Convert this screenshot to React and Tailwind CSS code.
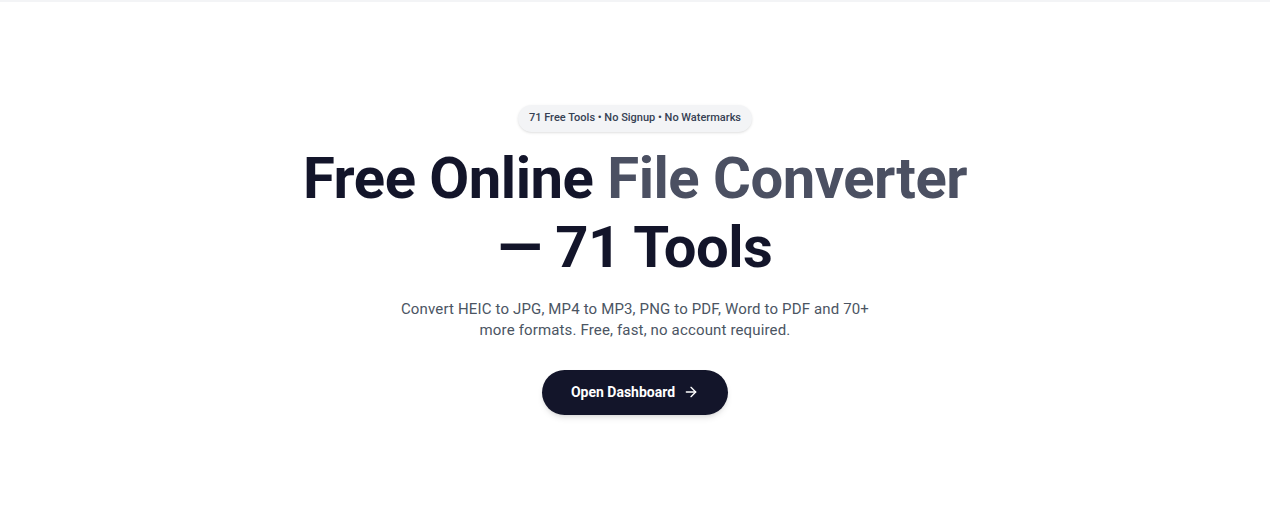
import { ArrowRight } from 'lucide-react';

export default function App() {
  return (
    <div className="min-h-screen bg-white border-t-2 border-gray-100 font-['Roboto',sans-serif]">
      <section className="flex flex-col items-center pt-[103px] text-center">
        <span className="rounded-full bg-gray-100 px-[11px] py-[5px] text-[11px] font-medium text-gray-700 shadow-sm">
          71 Free Tools • No Signup • No Watermarks
        </span>
        <h1 className="mt-[12px] text-[58px] font-bold leading-[69px] tracking-[-0.5px] text-[#13152a]">
          Free Online <span className="text-[#4b5062]">File Converter</span>
          <br />— 71 Tools
        </h1>
        <p className="mt-[17px] max-w-[480px] text-[15px] leading-[21px] tracking-[0.15px] text-[#4b5563]">
          Convert HEIC to JPG, MP4 to MP3, PNG to PDF, Word to PDF and 70+ more formats. Free, fast, no account required.
        </p>
        <button className="mt-[29px] flex h-[45px] w-[186px] items-center justify-center gap-2 rounded-full bg-[#13152a] text-[14px] font-bold text-white shadow-md">
          Open Dashboard
          <ArrowRight className="h-4 w-4" strokeWidth={2} />
        </button>
      </section>
    </div>
  );
}
